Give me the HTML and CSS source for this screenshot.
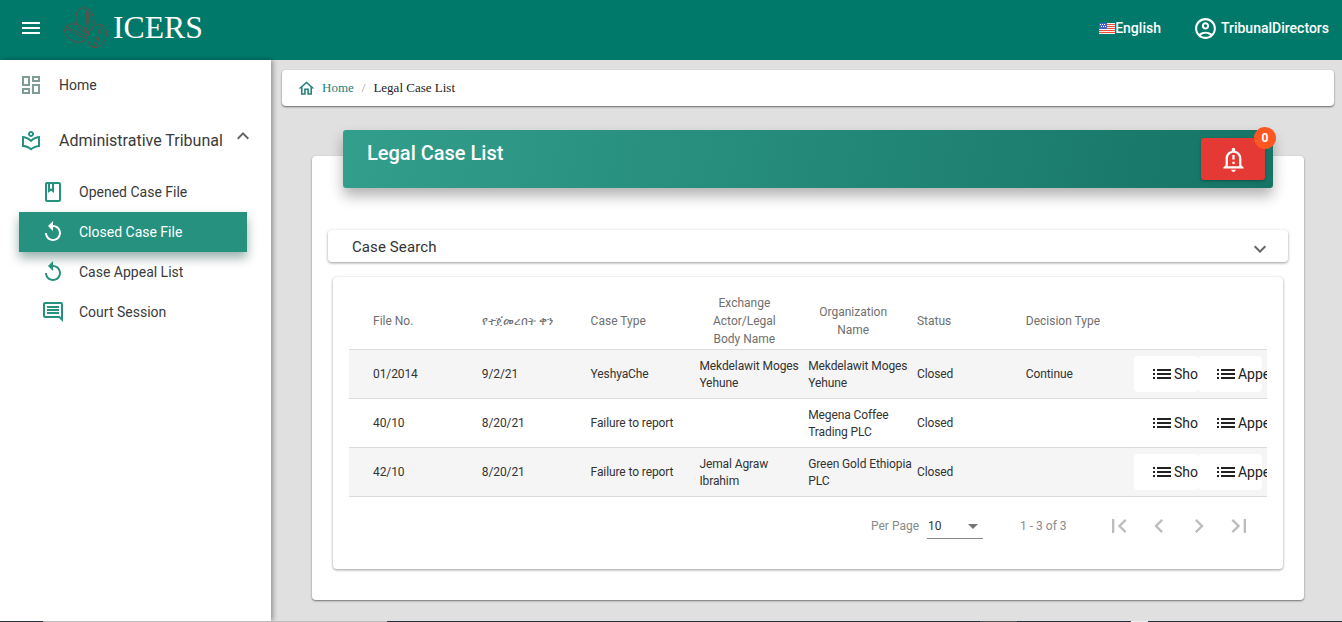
FILE: index.html
```html
<!DOCTYPE html>
<html lang="en">
<head>
<meta charset="UTF-8" />
<title>ICERS - Legal Case List</title>
<link rel="stylesheet" href="styles.css">
</head>

<body>
	<header class="topbar">
		<svg class="icon menuIcon" viewBox="0 0 24 24"><path d="M3 18h18v-2H3v2zm0-5h18v-2H3v2zm0-7v2h18V6H3z"/></svg>
		<svg class="logoMark" viewBox="0 0 46 42" fill="none" stroke="#75483f" stroke-width="0.8">
			<ellipse cx="22" cy="13" rx="9" ry="12.5" transform="rotate(-12 22 13)"/>
			<path d="M25 1c-4 7 2 12-5 24"/>
			<path d="M27 2c-4 7 2 11-5 22"/>
			<ellipse cx="13" cy="26" rx="12" ry="8.5" transform="rotate(25 13 26)"/>
			<path d="M2 22c8 0 11 8 21 9"/>
			<path d="M3 20c8 1 11 7 21 9"/>
			<ellipse cx="34" cy="29" rx="9" ry="12" transform="rotate(25 34 29)"/>
			<path d="M39 18c-6 6-3 13-10 22"/>
			<path d="M41 20c-6 6-3 12-10 21"/>
		</svg>
		<span class="logoText">ICERS</span>
		<div class="topRight">
			<span class="lang">
				<svg class="flag" viewBox="0 0 16 11"><rect width="16" height="11" fill="#f4f4f4"/><path d="M0 1h16v1H0zM0 3h16v1H0zM0 5h16v1H0zM0 7h16v1H0zM0 9h16v1H0z" fill="#e8503a"/><rect width="8" height="6" fill="#4a5fd0"/><path d="M1 1h1v1H1zM3 1h1v1H3zM5 1h1v1H5zM2 3h1v1H2zM4 3h1v1H4zM6 3h1v1H6z" fill="#fff"/></svg>English
			</span>
			<span class="user">
				<svg class="icon userIcon" viewBox="0 0 24 24"><path d="M12 2C6.48 2 2 6.48 2 12s4.48 10 10 10 10-4.48 10-10S17.52 2 12 2zM7.35 18.5C8.66 17.56 10.26 17 12 17s3.34.56 4.65 1.5C15.34 19.44 13.74 20 12 20s-3.34-.56-4.65-1.5zm10.79-1.38C16.45 15.8 14.32 15 12 15s-4.45.8-6.14 2.12C4.7 15.73 4 13.95 4 12c0-4.42 3.58-8 8-8s8 3.58 8 8c0 1.95-.7 3.73-1.86 5.12zM12 6c-1.93 0-3.5 1.57-3.5 3.5S10.07 13 12 13s3.5-1.57 3.5-3.5S13.93 6 12 6zm0 5c-.83 0-1.5-.67-1.5-1.5S11.17 8 12 8s1.5.67 1.5 1.5S12.83 11 12 11z"/></svg>
				TribunalDirectors
			</span>
		</div>
	</header>

	<div class="layout">
		<nav class="sidebar">
			<a class="navTop">
				<svg class="icon navIcon" viewBox="0 0 24 24"><path d="M19 5v2h-4V5h4M9 5v6H5V5h4m10 8v6h-4v-6h4M9 17v2H5v-2h4M21 3h-8v6h8V3zM11 3H3v10h8V3zm10 8h-8v10h8V11zm-10 4H3v6h8v-6z"/></svg>
				Home
			</a>
			<a class="navTop navGroup">
				<svg class="icon navIcon" viewBox="0 0 24 24"><path d="M12 9c1.66 0 3-1.34 3-3s-1.34-3-3-3-3 1.34-3 3 1.34 3 3 3zm0-4c.55 0 1 .45 1 1s-.45 1-1 1-1-.45-1-1 .45-1 1-1zm0 6.55C9.64 9.35 6.48 8 3 8v11c3.48 0 6.64 1.35 9 3.55 2.36-2.19 5.52-3.55 9-3.55V8c-3.48 0-6.64 1.35-9 3.55zm7 5.58c-2.53.34-4.93 1.3-7 2.82-2.06-1.52-4.47-2.49-7-2.83v-6.95c2.1.38 4.05 1.35 5.64 2.83L12 14.28l1.36-1.27c1.59-1.48 3.54-2.45 5.64-2.83v6.95z"/></svg>
				<span class="groupLabel">Administrative Tribunal</span>
				<svg class="icon expandIcon" viewBox="0 0 24 24"><path d="M12 8l-6 6 1.41 1.41L12 10.83l4.59 4.58L18 14z"/></svg>
			</a>
			<div class="subList">
				<a class="navSub">
					<svg class="icon navIcon" viewBox="0 0 24 24"><path d="M18 2H6c-1.1 0-2 .9-2 2v16c0 1.1.9 2 2 2h12c1.1 0 2-.9 2-2V4c0-1.1-.9-2-2-2zM9 4h2v5l-1-.75L9 9V4zm9 16H6V4h1v9l3-2.25L13 13V4h5v16z"/></svg>
					Opened Case File
				</a>
				<a class="navSub active">
					<svg class="icon navIcon" viewBox="0 0 24 24"><path d="M12 5V1L7 6l5 5V7c3.31 0 6 2.69 6 6s-2.69 6-6 6-6-2.69-6-6H4c0 4.42 3.58 8 8 8s8-3.58 8-8-3.58-8-8-8z"/></svg>
					Closed Case File
				</a>
				<a class="navSub">
					<svg class="icon navIcon" viewBox="0 0 24 24"><path d="M12 5V1L7 6l5 5V7c3.31 0 6 2.69 6 6s-2.69 6-6 6-6-2.69-6-6H4c0 4.42 3.58 8 8 8s8-3.58 8-8-3.58-8-8-8z"/></svg>
					Case Appeal List
				</a>
				<a class="navSub">
					<svg class="icon navIcon" viewBox="0 0 24 24"><path d="M21.99 4c0-1.1-.89-2-1.99-2H4c-1.1 0-2 .9-2 2v12c0 1.1.9 2 2 2h14l4 4-.01-18zM20 4v13.17L18.83 16H4V4h16zM6 12h12v2H6zm0-3h12v2H6zm0-3h12v2H6z"/></svg>
					Court Session
				</a>
			</div>
		</nav>

		<main class="content">
			<div class="crumbs">
				<svg class="icon crumbHome" viewBox="0 0 24 24"><path d="M12 5.69l5 4.5V18h-2v-6H9v6H7v-7.81l5-4.5M12 3L2 12h3v8h6v-6h2v6h6v-8h3L12 3z"/></svg>
				<span class="crumbLink">Home</span>
				<span class="crumbSep">/</span>
				<span class="crumbNow">Legal Case List</span>
			</div>

			<div class="titleBar">
				<h1>Legal Case List</h1>
				<div class="alertBtn">
					<svg class="icon bellIcon" viewBox="0 0 24 24"><path d="M10.01 21.01c0 1.1.89 1.99 1.99 1.99s1.99-.89 1.99-1.99h-3.98zM12 6c2.76 0 5 2.24 5 5v7H7v-7c0-2.76 2.24-5 5-5zm0-4.5c-.83 0-1.5.67-1.5 1.5v1.17C7.36 4.85 5 7.65 5 11v6l-2 2v1h18v-1l-2-2v-6c0-3.35-2.36-6.15-5.5-6.83V3c0-.83-.67-1.5-1.5-1.5zM11 8h2v4h-2zm0 6h2v2h-2z"/></svg>
					<span class="badge">0</span>
				</div>
			</div>

			<section class="card">
				<div class="accordion">
					<span>Case Search</span>
					<svg class="icon accIcon" viewBox="0 0 24 24"><path d="M16.59 8.59L12 13.17 7.41 8.59 6 10l6 6 6-6z"/></svg>
				</div>

				<div class="tableCard">
					<div class="tableWrap">
						<div class="row headRow">
							<div class="cell">File No.</div>
							<div class="cell">የተጀመረበት ቀን</div>
							<div class="cell">Case Type</div>
							<div class="cell centered">Exchange Actor/Legal Body Name</div>
							<div class="cell centered">Organization Name</div>
							<div class="cell">Status</div>
							<div class="cell">Decision Type</div>
							<div class="cell"></div>
						</div>

						<div class="row odd">
							<div class="cell">01/2014</div>
							<div class="cell">9/2/21</div>
							<div class="cell">YeshyaChe</div>
							<div class="cell twoLine">Mekdelawit Moges Yehune</div>
							<div class="cell twoLine">Mekdelawit Moges Yehune</div>
							<div class="cell">Closed</div>
							<div class="cell">Continue</div>
							<div class="actions">
								<span class="actBtn showBtn"><svg class="icon" viewBox="0 0 24 24"><path d="M3 13h2v-2H3v2zm0 4h2v-2H3v2zm0-8h2V7H3v2zm4 4h14v-2H7v2zm0 4h14v-2H7v2zM7 7v2h14V7H7z"/></svg>Show</span>
								<span class="actBtn"><svg class="icon" viewBox="0 0 24 24"><path d="M3 13h2v-2H3v2zm0 4h2v-2H3v2zm0-8h2V7H3v2zm4 4h14v-2H7v2zm0 4h14v-2H7v2zM7 7v2h14V7H7z"/></svg>Appeal</span>
							</div>
						</div>

						<div class="row">
							<div class="cell">40/10</div>
							<div class="cell">8/20/21</div>
							<div class="cell">Failure to report</div>
							<div class="cell"></div>
							<div class="cell twoLine">Megena Coffee Trading PLC</div>
							<div class="cell">Closed</div>
							<div class="cell"></div>
							<div class="actions">
								<span class="actBtn showBtn"><svg class="icon" viewBox="0 0 24 24"><path d="M3 13h2v-2H3v2zm0 4h2v-2H3v2zm0-8h2V7H3v2zm4 4h14v-2H7v2zm0 4h14v-2H7v2zM7 7v2h14V7H7z"/></svg>Show</span>
								<span class="actBtn"><svg class="icon" viewBox="0 0 24 24"><path d="M3 13h2v-2H3v2zm0 4h2v-2H3v2zm0-8h2V7H3v2zm4 4h14v-2H7v2zm0 4h14v-2H7v2zM7 7v2h14V7H7z"/></svg>Appeal</span>
							</div>
						</div>

						<div class="row odd">
							<div class="cell">42/10</div>
							<div class="cell">8/20/21</div>
							<div class="cell">Failure to report</div>
							<div class="cell twoLine">Jemal Agraw<br>Ibrahim</div>
							<div class="cell twoLine">Green Gold Ethiopia PLC</div>
							<div class="cell">Closed</div>
							<div class="cell"></div>
							<div class="actions">
								<span class="actBtn showBtn"><svg class="icon" viewBox="0 0 24 24"><path d="M3 13h2v-2H3v2zm0 4h2v-2H3v2zm0-8h2V7H3v2zm4 4h14v-2H7v2zm0 4h14v-2H7v2zM7 7v2h14V7H7z"/></svg>Show</span>
								<span class="actBtn"><svg class="icon" viewBox="0 0 24 24"><path d="M3 13h2v-2H3v2zm0 4h2v-2H3v2zm0-8h2V7H3v2zm4 4h14v-2H7v2zm0 4h14v-2H7v2zM7 7v2h14V7H7z"/></svg>Appeal</span>
							</div>
						</div>
					</div>

					<div class="pager">
						<span class="perLabel">Per Page</span>
						<span class="perSelect">10<i class="caret"></i></span>
						<span class="range">1 - 3 of 3</span>
						<svg class="icon pageIcon" viewBox="0 0 24 24"><path d="M18.41 16.59L13.82 12l4.59-4.59L17 6l-6 6 6 6zM6 6h2v12H6z"/></svg>
						<svg class="icon pageIcon" viewBox="0 0 24 24"><path d="M15.41 7.41L14 6l-6 6 6 6 1.41-1.41L10.83 12z"/></svg>
						<svg class="icon pageIcon" viewBox="0 0 24 24"><path d="M10 6L8.59 7.41 13.17 12l-4.58 4.59L10 18l6-6z"/></svg>
						<svg class="icon pageIcon" viewBox="0 0 24 24"><path d="M5.59 7.41L10.18 12l-4.59 4.59L7 18l6-6-6-6zM16 6h2v12h-2z"/></svg>
					</div>
				</div>
			</section>
		</main>
	</div>

	<div class="bottomStrip">
		<i class="seg segDark seg1"></i>
		<i class="seg segGrey seg2"></i>
		<i class="seg segDark seg3"></i>
		<i class="seg segMid seg4"></i>
		<i class="seg segDark seg5"></i>
		<i class="seg segLight seg6"></i>
		<i class="seg segDark seg7"></i>
	</div>
</body>

</html>
```

FILE: styles.css
```css
* {
	box-sizing: border-box;
}

html, body {
	height: 100%;
}

body {
	margin: 0;
	overflow: hidden;
	display: flex;
	flex-direction: column;
	font-family: Roboto, "Noto Sans", sans-serif;
	font-size: 14px;
	color: #333;
	background-color: #e0e0e0;
}

.icon {
	display: block;
	width: 24px;
	height: 24px;
	fill: currentColor;
	flex: none;
}

/* top bar */
.topbar {
	height: 60px;
	flex: none;
	display: flex;
	align-items: center;
	padding: 0 0 4px 19px;
	background-color: #00796b;
	color: white;
}

.menuIcon {
	margin-right: 20px;
}

.logoMark {
	width: 46px;
	height: 42px;
	margin-right: 4px;
}

.logoText {
	font-family: "Liberation Serif", serif;
	font-size: 31.7px;
	line-height: 1;
}

.topRight {
	margin-left: auto;
	display: flex;
	align-items: center;
	padding-right: 13px;
	font-weight: 500;
}

.lang {
	display: flex;
	align-items: center;
	margin-right: 32px;
}

.flag {
	width: 16px;
	height: 11px;
	display: block;
}

.user {
	display: flex;
	align-items: center;
	gap: 3px;
}

.userIcon {
	width: 25px;
	height: 25px;
}

/* side menu */
.layout {
	flex: 1;
	display: flex;
	min-height: 0;
}

.sidebar {
	width: 271px;
	flex: none;
	background-color: white;
	box-shadow: 2px 0 5px rgba(0, 0, 0, 0.35);
	position: relative;
}

.navTop {
	display: flex;
	align-items: center;
	padding-left: 19px;
	height: 50px;
	color: #3a3a3a;
}

.navTop .navIcon {
	margin-right: 16px;
}

.navGroup {
	height: 60px;
	font-size: 16px;
}

.navIcon {
	color: #26917f;
}

.navTop:first-child .navIcon {
	color: #7f9c97;
}

.groupLabel {
	flex: none;
}

.expandIcon {
	margin: -9px 0 0 8px;
	width: 24px;
	color: #666;
}

.subList {
	padding-top: 2px;
}

.navSub {
	display: flex;
	align-items: center;
	height: 40px;
	width: 228px;
	margin-left: 19px;
	padding-left: 22px;
	color: #3a3a3a;
}

.navSub .navIcon {
	margin-right: 14px;
}

.navSub.active {
	background-color: #26917f;
	color: white;
	box-shadow: 0 6px 10px rgba(0, 60, 50, 0.4);
}

.navSub.active .navIcon {
	color: white;
}

/* main area */
.content {
	flex: 1;
	min-width: 0;
	padding: 10px 8px 0 11px;
}

.crumbs {
	height: 36px;
	display: flex;
	align-items: center;
	padding-left: 15px;
	background-color: white;
	border-radius: 4px;
	box-shadow: 0 1px 2px rgba(0, 0, 0, 0.55);
	font-family: "Liberation Serif", serif;
	font-size: 13px;
}

.crumbHome {
	width: 19px;
	height: 19px;
	color: #26817a;
	margin-right: 6px;
}

.crumbLink {
	color: #26817a;
}

.crumbSep {
	color: #999;
	margin: 0 8px;
}

.crumbNow {
	color: #222;
}

.titleBar {
	position: relative;
	z-index: 1;
	height: 58px;
	margin: 24px 61px 0 61px;
	padding-left: 24px;
	border-radius: 3px;
	background: linear-gradient(100deg, #339e8c, #157465);
	box-shadow: 0 8px 14px rgba(0, 0, 0, 0.3);
	color: white;
	display: flex;
	justify-content: space-between;
}

.titleBar h1 {
	margin: 11px 0 0;
	font-size: 20px;
	font-weight: 500;
	line-height: 24px;
}

.alertBtn {
	position: relative;
	width: 64px;
	height: 42px;
	margin: 8px 8px 0 0;
	display: flex;
	align-items: center;
	justify-content: center;
	background-color: #e53935;
	border-radius: 3px;
	box-shadow: 0 1px 3px rgba(0, 0, 0, 0.3);
}

.bellIcon {
	width: 27px;
	height: 27px;
}

.badge {
	position: absolute;
	top: -11px;
	right: -11px;
	width: 22px;
	height: 22px;
	border-radius: 50%;
	background-color: #ff5722;
	font-size: 12px;
	font-weight: 700;
	line-height: 22px;
	text-align: center;
}

.card {
	height: 444px;
	margin: -32px 30px 0 30px;
	padding: 74px 16px 0 16px;
	background-color: white;
	border-radius: 4px;
	box-shadow: 0 1px 2px rgba(0, 0, 0, 0.5);
}

.accordion {
	height: 32px;
	display: flex;
	align-items: center;
	justify-content: space-between;
	padding: 1px 16px 0 24px;
	border-radius: 4px;
	background-color: white;
	box-shadow: 0 1px 3px rgba(0, 0, 0, 0.4);
	font-size: 15px;
	letter-spacing: 0.1px;
}

.accIcon {
	color: #666;
	margin-top: 5px;
}

.tableCard {
	height: 292px;
	margin: 15px 5px 0 5px;
	padding: 8px 16px 0 16px;
	border-radius: 4px;
	background-color: white;
	box-shadow: 0 1px 3px rgba(0, 0, 0, 0.4);
}

.tableWrap {
	overflow: hidden;
}

.row {
	display: grid;
	grid-template-columns: repeat(7, 108.8px) 1fr;
	align-items: center;
	height: 49px;
	border-bottom: 1px solid #dcdcdc;
	font-size: 12px;
	line-height: 17px;
	letter-spacing: -0.1px;
}

.row.odd {
	background-color: #f5f5f5;
}

.headRow {
	height: 65px;
	padding-top: 8px;
	color: #6f6f6f;
	line-height: 18px;
	letter-spacing: 0;
}

.cell {
	padding-left: 24px;
	margin-right: -24px;
}

.twoLine {
	padding-top: 2px;
}

.headRow .cell {
	margin-right: -5.2px;
}

.centered {
	text-align: center;
}

.actions {
	display: flex;
	align-items: center;
	min-width: 0;
	padding-left: 23.4px;
}

.actBtn {
	width: 64px;
	height: 36px;
	flex: none;
	display: flex;
	align-items: center;
	padding-left: 16px;
	border-radius: 4px;
	background-color: white;
	white-space: nowrap;
	font-size: 14px;
	letter-spacing: 0;
	color: #222;
}

.row:not(.odd) .actBtn {
	background-color: transparent;
}

.showBtn {
	overflow: hidden;
}

.pager {
	display: flex;
	align-items: center;
	height: 58px;
	padding-left: 522px;
	color: #8a8a8a;
	font-size: 12px;
}

.perLabel {
	margin-right: 8px;
}

.perSelect {
	width: 56px;
	height: 24px;
	display: flex;
	align-items: center;
	justify-content: space-between;
	padding: 0 5px 0 1px;
	border-bottom: 1px solid #8a8a8a;
	color: #333;
	margin-top: 1px;
}

.caret {
	border-left: 5px solid transparent;
	border-right: 5px solid transparent;
	border-top: 5px solid #757575;
}

.range {
	margin: -1px 38px 0 37px;
}

.pageIcon {
	width: 28px;
	height: 28px;
	margin-right: 12px;
	color: #bdbdbd;
}

/* thin strip along the bottom edge */
.bottomStrip {
	height: 1px;
	flex: none;
	display: flex;
	position: relative;
}

.seg {
	display: block;
	height: 1px;
}

.segDark { background-color: #263238; }
.segGrey { background-color: #bdbdbd; }
.segMid { background-color: #555; }
.segLight { background-color: #eee; }

.seg1 { width: 43px; }
.seg2 { width: 344px; }
.seg3 { width: 593px; }
.seg4 { width: 37px; }
.seg5 { width: 114px; }
.seg6 { width: 17px; }
.seg7 { flex: 1; }
```
